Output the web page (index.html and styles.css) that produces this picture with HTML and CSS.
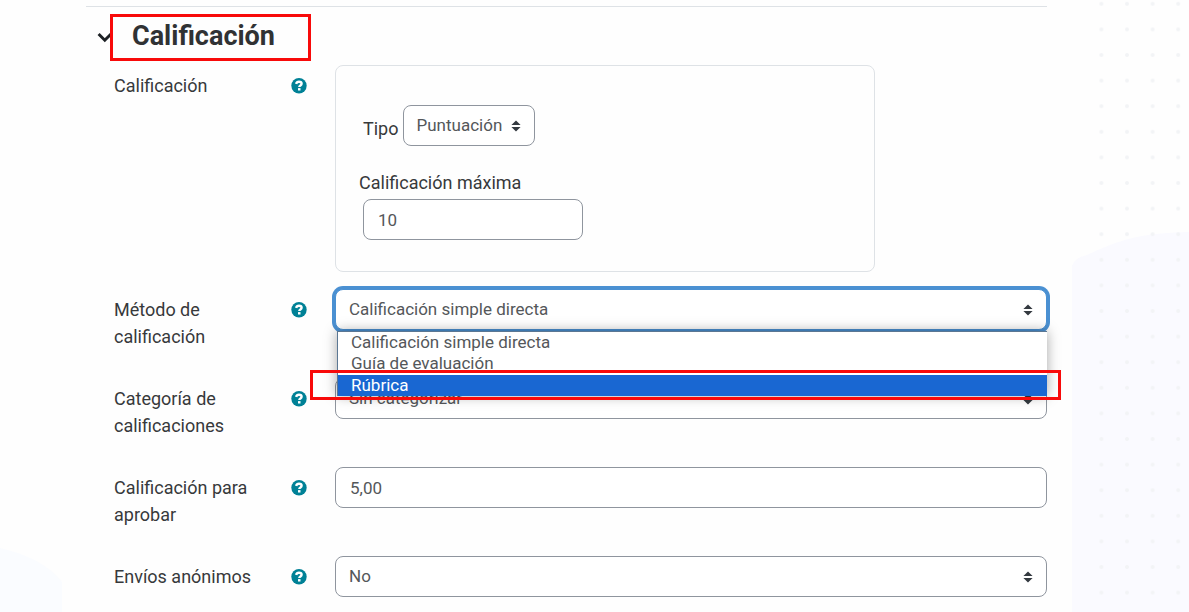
FILE: index.html
```
<!DOCTYPE html>
<html lang="es">
<head>
<meta charset="UTF-8">
<meta name="viewport" content="width=device-width, initial-scale=1">
<title>Calificación</title>
<link rel="stylesheet" href="styles.css">
</head>
<body>

<!-- Icons -->
<svg class="sprite" aria-hidden="true">
    <symbol id="icon-help" viewBox="0 0 16 16">
        <circle cx="8" cy="7.7" r="7.7" fill="#008196"/>
        <path d="M5.1 5.9C5.5 4.4 6.5 3.7 8 3.7c1.6 0 2.6.8 2.6 2.1 0 1.7-2.3 1.6-2.3 3.2" fill="none" stroke="#fff" stroke-width="2.4"/>
        <rect x="7" y="10.1" width="2.5" height="2.4" fill="#fff"/>
    </symbol>
    <symbol id="icon-sort" viewBox="0 0 10 12">
        <path d="M5 0.5 9.6 5H.4zM5 11.5.4 7h9.2z" fill="#343a40"/>
    </symbol>
</svg>

<!-- Background decoration -->
<svg class="decor decor-right" width="120" height="100%" aria-hidden="true">
    <defs>
        <pattern id="dots" x="19.6" y="-9" width="25.6" height="25.6" patternUnits="userSpaceOnUse">
            <circle cx="12.8" cy="12.8" r="2" fill="#f2f4f6"/>
        </pattern>
    </defs>
    <path d="M3 2000V266Q5 258 18 255C50 240 70 233 120 232V2000z" fill="#fafaff"/>
    <rect x="19" y="0" width="101" height="100%" fill="url(#dots)"/>
</svg>
<svg class="decor decor-left" width="64" height="68" aria-hidden="true">
    <path d="M0 0C26 6 48 16 62 34V68H0z" fill="#fafcff"/>
</svg>

<main class="section">
    <div class="section-header">
        <button class="toggle" type="button" aria-label="Contraer Calificación" aria-expanded="true">
            <svg width="16" height="12" viewBox="0 0 16 12"><path d="M1.6 2 7.8 8.2 14 2" fill="none" stroke="#1d2125" stroke-width="3"/></svg>
        </button>
        <h3>Calificación</h3>
    </div>

    <form class="form">
        <!-- Calificación -->
        <div class="row">
            <div class="row-label">
                <span id="gradeLabel">Calificación</span>
                <button class="help" type="button" aria-label="Ayuda con Calificación"><svg><use href="#icon-help"/></svg></button>
            </div>
            <fieldset class="grade-box" aria-labelledby="gradeLabel">
                <div class="type-row">
                    <label for="type">Tipo</label>
                    <div class="select-wrap">
                        <select id="type" class="field"><option>Puntuación</option></select>
                        <svg class="sort"><use href="#icon-sort"/></svg>
                    </div>
                </div>
                <label class="max-label" for="maxGrade">Calificación máxima</label>
                <input id="maxGrade" class="field max-grade" type="text" value="10">
            </fieldset>
        </div>

        <!-- Método de calificación -->
        <div class="row">
            <div class="row-label">
                <label for="method">Método de calificación</label>
                <button class="help" type="button" aria-label="Ayuda con Método de calificación"><svg><use href="#icon-help"/></svg></button>
            </div>
            <div class="select-wrap open">
                <select id="method" class="field">
                    <option>Calificación simple directa</option>
                    <option>Guía de evaluación</option>
                    <option>Rúbrica</option>
                </select>
                <svg class="sort"><use href="#icon-sort"/></svg>
                <div class="menu">
                    <ul role="listbox" aria-label="Método de calificación">
                        <li role="option">Calificación simple directa</li>
                        <li role="option">Guía de evaluación</li>
                        <li role="option" class="selected" aria-selected="true">Rúbrica</li>
                    </ul>
                    <div class="mark"></div>
                </div>
            </div>
        </div>

        <!-- Categoría -->
        <div class="row">
            <div class="row-label">
                <label for="category">Categoría de calificaciones</label>
                <button class="help" type="button" aria-label="Ayuda con Categoría de calificaciones"><svg><use href="#icon-help"/></svg></button>
            </div>
            <div class="select-wrap">
                <select id="category" class="field"><option>Sin categorizar</option></select>
                <svg class="sort"><use href="#icon-sort"/></svg>
            </div>
        </div>

        <!-- Calificación para aprobar -->
        <div class="row">
            <div class="row-label">
                <label for="pass">Calificación para aprobar</label>
                <button class="help" type="button" aria-label="Ayuda con Calificación para aprobar"><svg><use href="#icon-help"/></svg></button>
            </div>
            <input id="pass" class="field" type="text" value="5,00">
        </div>

        <!-- Envíos anónimos -->
        <div class="row">
            <div class="row-label">
                <label for="blind">Envíos anónimos</label>
                <button class="help" type="button" aria-label="Ayuda con Envíos anónimos"><svg><use href="#icon-help"/></svg></button>
            </div>
            <div class="select-wrap">
                <select id="blind" class="field"><option>No</option></select>
                <svg class="sort"><use href="#icon-sort"/></svg>
            </div>
        </div>
    </form>
</main>

</body>
</html>
```
FILE: styles.css
```
* {
    box-sizing: border-box;
}

body {
    margin: 0;
    min-height: 100vh;
    position: relative;
    overflow-x: hidden;
    background: #fefefe;
    color: #37393b;
    font-family: Roboto, "Liberation Sans", sans-serif;
    font-size: 18px;
    line-height: 27px;
}

button {
    padding: 0;
    border: none;
    background: none;
    cursor: pointer;
}

.sprite {
    position: absolute;
    width: 0;
    height: 0;
}

.decor {
    position: absolute;
    z-index: -1;
}

.decor-right {
    top: 0;
    right: 0;
}

.decor-left {
    left: 0;
    bottom: 0;
}

.section {
    margin: 6px 142px 0 86px;
    padding-top: 7px;
    border-top: 1px solid #dee2e6;
}

.section-header {
    display: flex;
    align-items: center;
    margin-bottom: 4px;
    padding-left: 11px;
}

.toggle {
    display: flex;
    margin-right: -3px;
}

h3 {
    margin: 0;
    padding: 4px 33px 7px 19px;
    border: 3px solid #f80a0a;
    color: #303234;
    font-size: 27px;
    font-weight: 700;
    line-height: 30px;
}

.form {
    display: flex;
    flex-direction: column;
    gap: 17px;
    padding: 0 0 15px 28px;
}

.row {
    display: grid;
    grid-template-columns: 193px minmax(0, 1fr);
    column-gap: 28px;
    align-items: start;
}

.row-label {
    display: flex;
    justify-content: space-between;
    align-items: flex-start;
    padding: 7px 0 11px;
}

.help {
    display: flex;
    align-items: center;
    height: 27px;
}

.help svg {
    width: 16px;
    height: 16px;
}

.field {
    display: block;
    width: 100%;
    height: 41px;
    padding: 0 14px;
    border: 1px solid #8f959e;
    border-radius: 8px;
    background: #fff;
    color: #54575a;
    font-family: inherit;
    font-size: 17px;
    line-height: 27px;
}

select.field {
    appearance: none;
    padding-right: 31px;
    padding-left: 13px;
}

.select-wrap {
    position: relative;
}

.sort {
    position: absolute;
    top: 15px;
    right: 14px;
    width: 10px;
    height: 12px;
    pointer-events: none;
}

.grade-box {
    width: 100%;
    max-width: 540px;
    margin: 0;
    padding: 39px 23px 31px;
    border: 1px solid #dee2e6;
    border-radius: 8px;
}

.type-row {
    display: flex;
    gap: 4px;
    margin-bottom: 23px;
    padding-left: 4px;
}

.type-row label {
    padding-top: 10px;
}

.max-label {
    display: block;
    margin-bottom: 3px;
}

.max-grade {
    width: 220px;
    margin-left: 4px;
}

/* Open drop-down */
.open .field {
    border-color: #4a90d2;
    box-shadow: 0 0 0 3px #4a90d2;
}

.menu {
    position: absolute;
    z-index: 1;
    top: 42px;
    left: 2px;
    right: 0;
}

.menu ul {
    margin: 0;
    padding: 0;
    border: 1px solid #5b7793;
    border-width: 1px 0 0 1px;
    background: #fff;
    box-shadow: 0 0 12px rgba(0, 0, 0, 0.35);
    list-style: none;
}

.menu li {
    padding-left: 13px;
    color: #54575a;
    font-size: 17px;
    line-height: 21px;
}

.menu .selected {
    margin-top: 1px;
    background: #1967d2;
    color: #fff;
}

.mark {
    position: absolute;
    left: -27px;
    right: -14px;
    bottom: -4px;
    height: 30px;
    border: 3px solid #f80a0a;
}
```
